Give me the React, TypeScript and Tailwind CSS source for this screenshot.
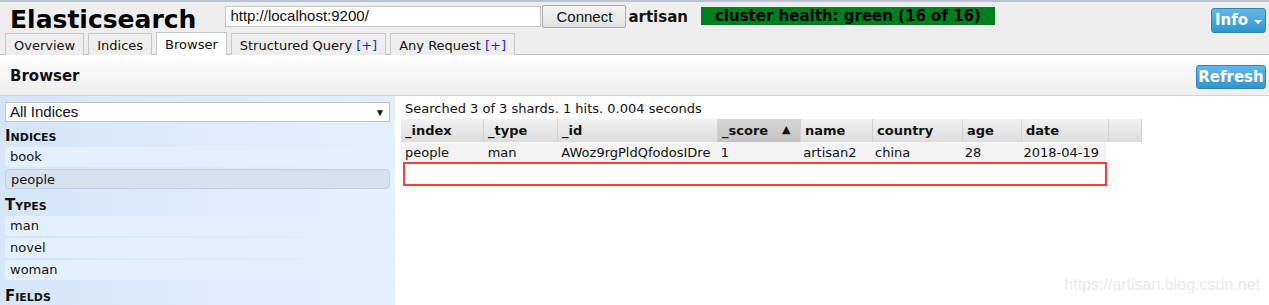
import { useState } from "react";

const verdana = { fontFamily: '"DejaVu Sans", Verdana, sans-serif' };
const arial = { fontFamily: '"Liberation Sans", Arial, sans-serif' };

const tabs = [
  { label: "Overview" },
  { label: "Indices" },
  { label: "Browser", active: true },
  { label: "Structured Query", plus: true },
  { label: "Any Request", plus: true },
];

const columns = [
  { key: "_index", w: "w-[83px]" },
  { key: "_type", w: "w-[74px]" },
  { key: "_id", w: "w-[160px]" },
  { key: "_score", w: "w-[83px]", sorted: true },
  { key: "name", w: "w-[72px]" },
  { key: "country", w: "w-[90px]" },
  { key: "age", w: "w-[59px]" },
  { key: "date", w: "w-[87px]" },
];

const row = ["people", "man", "AWoz9rgPldQfodosIDre", "1", "artisan2", "china", "28", "2018-04-19"];

const BlueButton = ({ children, className = "" }: { children: React.ReactNode; className?: string }) => (
  <button
    className={`rounded-[3px] border border-[#2f86b8] bg-gradient-to-b from-[#62b8e8] to-[#2f96cf] text-[15px] font-bold text-white ${className}`}
    style={verdana}
  >
    {children}
  </button>
);

const SideItem = ({ label, selected }: { label: string; selected?: boolean }) => (
  <div
    className={`mx-[5px] mb-[2px] h-[20px] rounded-[4px] px-[5px] text-[13px] leading-[20px] text-[#111] ${
      selected ? "border border-[#c3d0dd] bg-[#d6e2ef] leading-[18px]" : "bg-[#e3f0ff]"
    }`}
  >
    {label}
  </div>
);

const SideHead = ({ label }: { label: string }) => (
  <div className="px-[5px] pt-[6px] pb-[3px] text-[15px] font-bold leading-[16px] text-[#111] [font-variant:small-caps]">
    {label}
  </div>
);

export default function App() {
  const [url, setUrl] = useState("http://localhost:9200/");

  return (
    <div className="relative h-[305px] w-[1269px] overflow-hidden bg-white text-[#111]" style={verdana}>
      {/* top header */}
      <div className="border-t-2 border-[#b9c4cf] bg-[#eeeeee]">
        <div className="flex h-[31px] items-start">
          <div className="ml-[10px] mt-[3px] text-[25px] font-bold leading-[30px] text-black">Elasticsearch</div>
          <input
            value={url}
            onChange={(e) => setUrl(e.target.value)}
            className="ml-[29px] mt-[4px] h-[21px] w-[316px] border border-[#c8c8c8] bg-white px-[4px] text-[15px] text-[#111] outline-none"
            style={arial}
          />
          <button
            className="ml-[1px] mt-[3px] h-[23px] w-[84px] rounded-[2px] border border-[#adadad] bg-gradient-to-b from-[#f6f6f6] to-[#e1e1e1] text-[15px] text-[#111]"
            style={arial}
          >
            Connect
          </button>
          <span className="ml-[2px] mt-[5px] text-[15px] font-bold leading-[20px]">artisan</span>
          <span className="ml-[13px] mt-[5px] h-[18px] bg-[#007f20] px-[14px] text-[15px] font-bold leading-[18px] text-black">
            cluster health: green (16 of 16)
          </span>
          <div className="flex-1" />
          <BlueButton className="mr-[3px] mt-[6px] flex h-[25px] w-[55px] items-center justify-center gap-[6px]">
            Info
            <span className="mt-[2px] h-0 w-0 border-x-[4px] border-t-[4px] border-x-transparent border-t-white" />
          </BlueButton>
        </div>
        <div className="flex h-[22px] items-end gap-[4px] border-b border-[#c2c2c2] pl-[5px]">
          {tabs.map((t) => (
            <div
              key={t.label}
              className={`-mb-[1px] border border-b-0 border-[#c8c8c8] px-[8px] text-[13px] text-[#111] ${
                t.active ? "h-[23px] bg-white leading-[24px]" : "h-[22px] bg-[#eeeeee] leading-[23px]"
              }`}
            >
              {t.label}
              {t.plus && <span className="ml-[4px] text-[#2222ee]">[+]</span>}
            </div>
          ))}
        </div>
      </div>

      {/* browser title band */}
      <div className="flex h-[41px] items-center justify-between border-b border-[#d2d2d2] bg-gradient-to-b from-white to-[#eeeeee] pl-[10px] pr-[3px]">
        <span className="mt-[3px] text-[15px] font-bold">Browser</span>
        <BlueButton className="mt-[3px] h-[24px] w-[70px]">Refresh</BlueButton>
      </div>

      <div className="flex">
        {/* left sidebar */}
        <div className="h-[220px] w-[395px] bg-gradient-to-r from-[#d5e6fb] to-[#e5f0fd] pt-[6px]">
          <div
            className="mx-[5px] flex h-[20px] items-center justify-between border border-[#c3c3c3] bg-white px-[4px] text-[15px]"
            style={arial}
          >
            <span>All Indices</span>
            <span className="text-[10px]">▼</span>
          </div>
          <SideHead label="Indices" />
          <SideItem label="book" />
          <SideItem label="people" selected />
          <SideHead label="Types" />
          <SideItem label="man" />
          <SideItem label="novel" />
          <SideItem label="woman" />
          <SideHead label="Fields" />
        </div>

        {/* results */}
        <div className="flex-1 pl-[6px] pt-[4px]">
          <div className="pl-[4px] text-[13px] leading-[18px]">Searched 3 of 3 shards. 1 hits. 0.004 seconds</div>
          <div className="mt-[1px] flex h-[23px]">
            {columns.map((c) => (
              <div
                key={c.key}
                className={`${c.w} flex items-center border-r border-[#d2d2d2] px-[4px] text-[13px] font-bold ${
                  c.sorted ? "bg-gradient-to-b from-[#d6d6d6] to-[#c4c4c4]" : "bg-gradient-to-b from-[#f2f2f2] to-[#dcdcdc]"
                }`}
              >
                {c.key}
                {c.sorted && <span className="ml-[14px] text-[11px]">▲</span>}
              </div>
            ))}
            <div className="w-[33px] border-r border-[#d2d2d2] bg-gradient-to-b from-[#f2f2f2] to-[#dcdcdc]" />
          </div>
          <div className="flex h-[20px] w-[705px] bg-[#f3f3f3]">
            {columns.map((c, i) => (
              <div key={c.key} className={`${c.w} px-[4px] pt-[1px] text-[13px] leading-[20px]`}>
                {row[i]}
              </div>
            ))}
          </div>
          <div className="ml-[2px] h-[24px] w-[704px] border-2 border-[#ff3b3b]" />
        </div>
      </div>

      <div className="absolute bottom-[8px] right-[9px] text-[16px] text-[#ebebeb]" style={arial}>
        https://artisan.blog.csdn.net
      </div>
    </div>
  );
}
